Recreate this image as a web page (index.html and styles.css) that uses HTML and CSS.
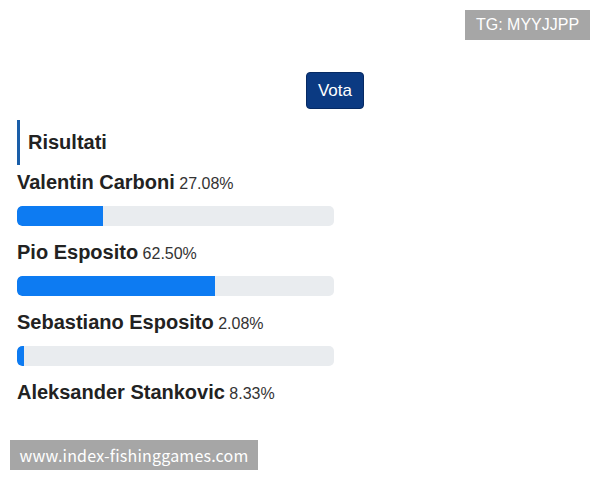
FILE: index.html
```html
<!DOCTYPE html>
<html lang="it">
<head>
<meta charset="utf-8">
<link rel="stylesheet" href="styles.css">
</head>
<body>
<div class="tg">TG: MYYJJPP</div>
<main class="poll">
  <div class="actions"><button class="vote">Vota</button></div>
  <h2 class="title">Risultati</h2>
  <div class="item">
    <div class="label"><b>Valentin Carboni</b> <span>27.08%</span></div>
    <div class="bar"><div class="fill" style="width:27.08%"></div></div>
  </div>
  <div class="item">
    <div class="label"><b>Pio Esposito</b> <span>62.50%</span></div>
    <div class="bar"><div class="fill" style="width:62.5%"></div></div>
  </div>
  <div class="item">
    <div class="label"><b>Sebastiano Esposito</b> <span>2.08%</span></div>
    <div class="bar"><div class="fill" style="width:2.08%"></div></div>
  </div>
  <div class="item">
    <div class="label"><b>Aleksander Stankovic</b> <span>8.33%</span></div>
  </div>
</main>
<div class="wm">www.index-fishinggames.com</div>
</body>
</html>
```
FILE: styles.css
```css
html, body {
  margin: 0;
  padding: 0;
  background: #fff;
  font-family: "Liberation Sans", Arial, sans-serif;
  color: #222;
}
body {
  width: 600px;
  height: 480px;
  position: relative;
  overflow: hidden;
}
.tg {
  position: absolute;
  top: 10px;
  right: 10px;
  width: 125px;
  height: 30px;
  background: #a6a6a6;
  color: #fff;
  font-size: 16px;
  line-height: 30px;
  text-align: center;
}
.poll {
  padding: 72px 0 0 17px;
  width: 317px;
}
.actions {
  display: flex;
  width: 347px;
  justify-content: flex-end;
  height: 37px;
}
.vote {
  flex-shrink: 0;
  width: 58px;
  height: 37px;
  border: 1px solid #062a63;
  border-radius: 4px;
  background: #0b3a82;
  color: #fff;
  font-family: "Liberation Sans", Arial, sans-serif;
  font-size: 17px;
  padding: 0;
}
.title {
  margin: 11px 0 0 0;
  height: 45px;
  border-left: 3px solid #1a5ea8;
  padding-left: 8px;
  font-size: 20px;
  font-weight: bold;
  line-height: 45px;
  color: #222;
}
.item {
  margin-top: 5px;
  margin-bottom: 14px;
}
.item + .item {
  margin-top: 0;
}
.label {
  height: 24px;
  line-height: 24px;
  font-size: 16px;
  white-space: nowrap;
}
.label b {
  font-size: 20px;
  font-weight: bold;
  color: #222;
}
.label span {
  color: #333;
}
.bar {
  margin-top: 12px;
  height: 20px;
  background: #e9ecef;
  border-radius: 5px;
  overflow: hidden;
}
.fill {
  height: 100%;
  background: #0d7bf2;
  border-radius: 5px 0 0 5px;
}
.item:last-child .label {
  margin-top: 2px;
}
.wm {
  position: absolute;
  left: 10px;
  top: 440px;
  width: 248px;
  height: 30px;
  background: #a6a6a6;
  color: #fff;
  font-family: "Noto Sans CJK SC", "Noto Sans", sans-serif;
  font-size: 16px;
  letter-spacing: 0.2px;
  line-height: 30px;
  text-align: center;
}
```
